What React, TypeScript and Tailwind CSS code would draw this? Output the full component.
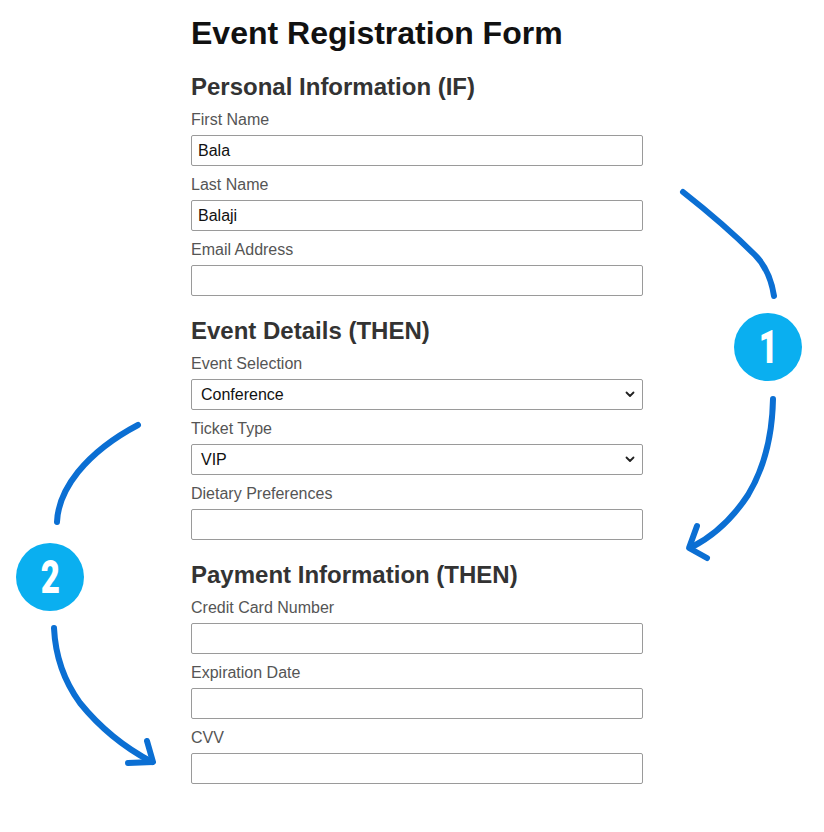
import React from 'react';

type Field = { label: string; value?: string; kind?: 'input' | 'select' };

const sections: { title: string; fields: Field[] }[] = [
  {
    title: 'Personal Information (IF)',
    fields: [
      { label: 'First Name', value: 'Bala' },
      { label: 'Last Name', value: 'Balaji' },
      { label: 'Email Address' },
    ],
  },
  {
    title: 'Event Details (THEN)',
    fields: [
      { label: 'Event Selection', value: 'Conference', kind: 'select' },
      { label: 'Ticket Type', value: 'VIP', kind: 'select' },
      { label: 'Dietary Preferences' },
    ],
  },
  {
    title: 'Payment Information (THEN)',
    fields: [
      { label: 'Credit Card Number' },
      { label: 'Expiration Date' },
      { label: 'CVV' },
    ],
  },
];

const FormField: React.FC<{ field: Field }> = ({ field }) => (
  <div className="flex flex-col">
    <label className="text-[16px] leading-[20px] text-[#555] pt-[1px]">{field.label}</label>
    {field.kind === 'select' ? (
      <div className="mt-[5px] h-[31px] border border-[#9a9a9a] rounded-[2px] flex items-center justify-between pl-[9px] pr-[7px] text-[16px] text-[#111]">
        <span>{field.value}</span>
        <svg width="10" height="7" viewBox="0 0 10 7" fill="none">
          <path d="M1.5 1.5 L5 5 L8.5 1.5" stroke="#222" strokeWidth="1.8" strokeLinecap="round" strokeLinejoin="round" />
        </svg>
      </div>
    ) : (
      <div className="mt-[5px] h-[31px] border border-[#9a9a9a] rounded-[2px] flex items-center pl-[6px] text-[16px] text-[#111]">
        {field.value}
      </div>
    )}
  </div>
);

const Badge: React.FC<{ n: string; className: string }> = ({ n, className }) => (
  <div className={`absolute w-[68px] h-[68px] rounded-full bg-[#0aaff0] flex items-center justify-center ${className}`}>
    <span className="text-white text-[46px] font-black leading-none scale-x-[0.72] font-['Roboto',sans-serif]">{n}</span>
  </div>
);

export default function App() {
  return (
    <div className="relative w-[824px] h-[832px] bg-white overflow-hidden font-['Liberation_Sans',Arial,sans-serif]">
      <div className="ml-[191px] w-[452px] pt-[15px] flex flex-col">
        <h1 className="text-[32px] leading-[36px] font-bold text-[#111]">Event Registration Form</h1>
        {sections.map((s, i) => (
          <div key={s.title} className={i === 0 ? 'mt-[22px]' : 'mt-[21px]'}>
            <h2 className="text-[24px] leading-[28px] font-bold text-[#333]">{s.title}</h2>
            <div className="mt-[8px] flex flex-col gap-[8px]">
              {s.fields.map(f => (
                <FormField key={f.label} field={f} />
              ))}
            </div>
          </div>
        ))}
      </div>

      {/* annotation arrows */}
      <svg className="absolute inset-0 pointer-events-none" width="824" height="832" viewBox="0 0 824 832" fill="none">
        <g stroke="#0b6fd3" strokeWidth="6" strokeLinecap="round" strokeLinejoin="round">
          <path d="M683 192 Q725 225 755 255 Q770 270 774 296" />
          <path d="M773 399 Q772 455 748 495 Q725 530 692 547" />
          <path d="M697 526 L689 548 L707 558" />
          <path d="M138 425 Q100 445 78 472 Q58 497 57 522" />
          <path d="M54 628 Q56 670 80 703 Q110 740 152 762" />
          <path d="M147 741 L153 762 L128 763" />
        </g>
      </svg>

      <Badge n="1" className="left-[734px] top-[313px]" />
      <Badge n="2" className="left-[16px] top-[543px]" />
    </div>
  );
}
